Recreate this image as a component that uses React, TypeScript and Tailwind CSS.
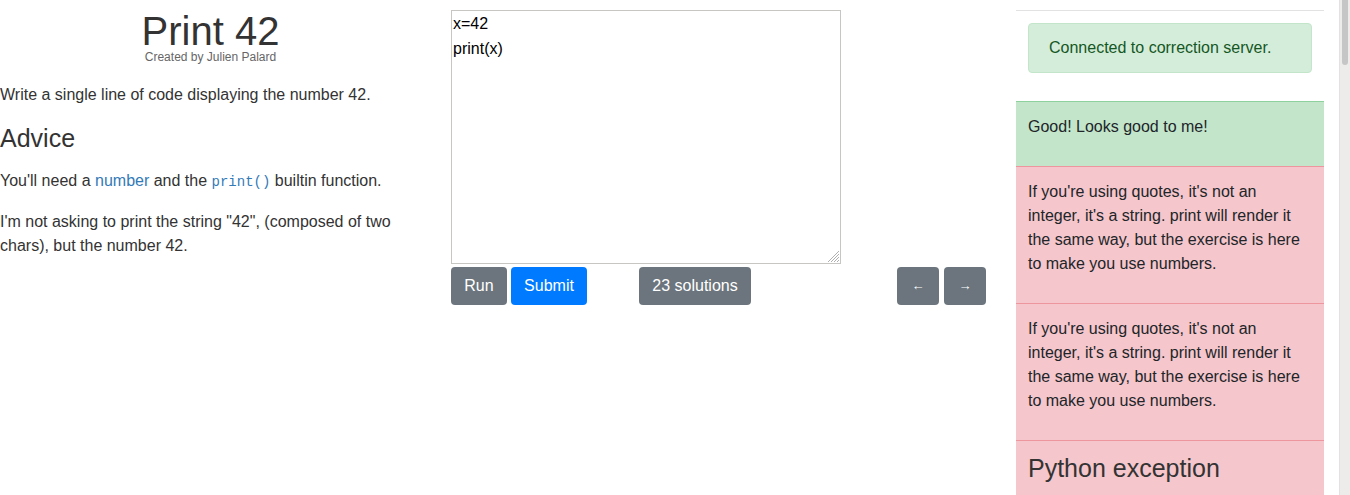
export default function App() {
  const hint =
    "If you're using quotes, it's not an integer, it's a string. print will render it the same way, but the exercise is here to make you use numbers.";

  return (
    <div className="flex h-[495px] w-[1350px] overflow-hidden bg-white font-['Liberation_Sans',Arial,sans-serif] text-[16px] leading-6 text-[#333]">
      <div className="flex flex-1">
        {/* Left column: exercise statement */}
        <div className="w-[436px] pr-[15px]">
          <div className="pt-[12px] text-center">
            <h1 className="text-[40px] leading-[38px] text-[#333]">Print 42</h1>
            <p className="mt-[1px] text-[12px] leading-[12px] text-[#666]">Created by Julien Palard</p>
          </div>
          <p className="mt-[20px]">Write a single line of code displaying the number 42.</p>
          <h3 className="mt-[16px] text-[25px] leading-[30px]">Advice</h3>
          <p className="mt-[16px]">
            You'll need a <span className="text-[#337ab7]">number</span> and the{" "}
            <code className="font-['Liberation_Mono',monospace] text-[14px] text-[#337ab7]">print()</code> builtin
            function.
          </p>
          <p className="mt-[16px]">
            I'm not asking to print the string "42", (composed of two chars), but the number 42.
          </p>
        </div>

        {/* Middle column: editor */}
        <div className="w-[565px] px-[15px] pt-[10px]">
          <div className="relative h-[254px] w-[390px] border border-[#c8c6c2] bg-white px-[1px] text-black">
            <div className="leading-[25px]">x=42</div>
            <div className="leading-[25px]">print(x)</div>
            <svg className="absolute bottom-0 right-0" width="14" height="14" viewBox="0 0 14 14">
              <path d="M13 2 L2 13 M13 5 L5 13 M13 8 L8 13 M13 11 L11 13" stroke="#b0b0b0" strokeWidth="1" />
            </svg>
          </div>
          <div className="mt-[3px] flex items-center">
            <button className="h-[38px] w-[56px] rounded-[4px] bg-[#6c757d] text-white">Run</button>
            <button className="ml-[4px] h-[38px] w-[76px] rounded-[4px] bg-[#007bff] text-white">Submit</button>
            <button className="ml-[52px] h-[38px] w-[112px] rounded-[4px] bg-[#6c757d] text-white">23 solutions</button>
            <div className="ml-auto flex gap-[5px]">
              <button className="h-[38px] w-[42px] rounded-[4px] bg-[#6c757d] text-[13px] text-white">←</button>
              <button className="h-[38px] w-[42px] rounded-[4px] bg-[#6c757d] text-[13px] text-white">→</button>
            </div>
          </div>
        </div>

        {/* Right column: correction output */}
        <div className="w-[338px] px-[15px]">
          <div className="mt-[10px] border-t border-[#e2e2e2]" />
          <div className="mx-[12px] mt-[12px] rounded-[4px] border border-[#c3e6cb] bg-[#d4edda] px-[20px] py-[12px] text-[#155724]">
            Connected to correction server.
          </div>
          <div className="mt-[28px] border-t border-[#8fd19e] bg-[#c3e6cb] px-[12px] pt-[13px] pb-[11px] text-[#212529]">
            <p className="mb-[16px]">Good! Looks good to me!</p>
          </div>
          <div className="border-t border-[#ed969e] bg-[#f5c6cb] px-[12px] pt-[13px] pb-[11px] text-[#212529]">
            <p className="mb-[16px]">{hint}</p>
          </div>
          <div className="border-t border-[#ed969e] bg-[#f5c6cb] px-[12px] pt-[13px] pb-[11px] text-[#212529]">
            <p className="mb-[16px]">{hint}</p>
          </div>
          <div className="h-[60px] border-t border-[#ed969e] bg-[#f5c6cb] px-[12px] pt-[10px] text-[#333]">
            <h3 className="text-[25px] leading-[34px]">Python exception</h3>
          </div>
        </div>
      </div>

      {/* Scrollbar */}
      <div className="w-[11px] border-l border-[#e4e2e0] bg-[#eeecea] px-[2px]">
        <div className="h-[65px] w-[6px] rounded-b-[3px] bg-[#c6c6c6]" />
      </div>
    </div>
  );
}
